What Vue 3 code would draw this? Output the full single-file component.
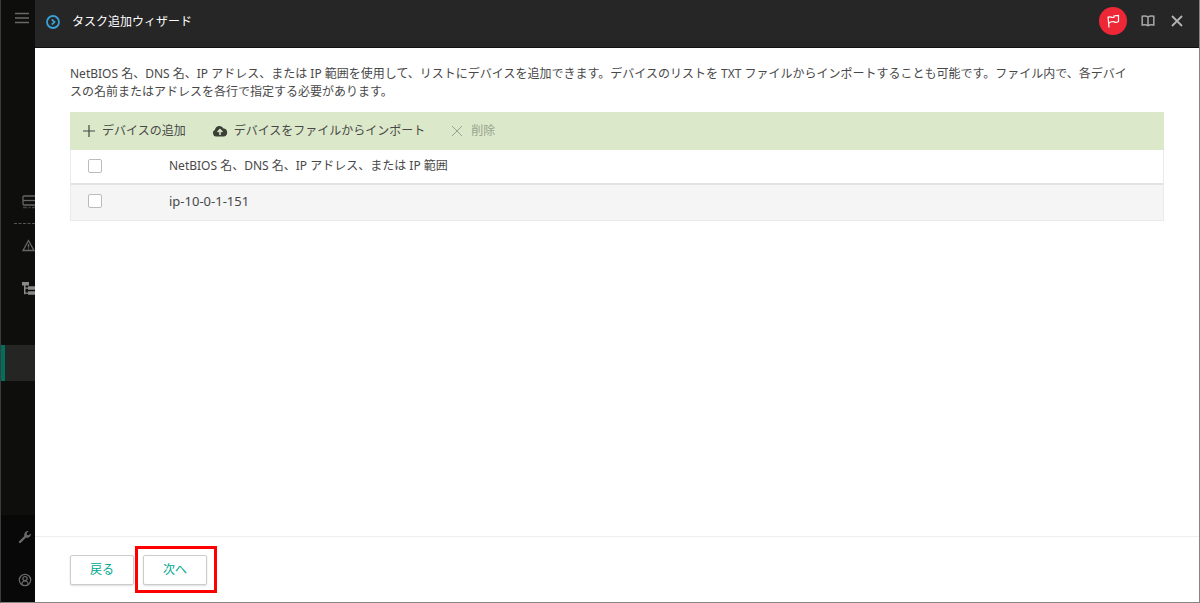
<script setup>
import { ref } from 'vue'

const columnTitle = 'NetBIOS 名、DNS 名、IP アドレス、または IP 範囲'

const devices = ref([{ id: 1, name: 'ip-10-0-1-151', selected: false }])
const allSelected = ref(false)

const toggleAll = () => {
  devices.value.forEach((device) => {
    device.selected = allSelected.value
  })
}
</script>

<template>
  <div class="page">
    <nav class="rail">
      <button class="rail__item rail__item--menu" aria-label="Menu">
        <svg width="16" height="12" viewBox="0 0 16 12" stroke="#686868" stroke-width="1.4">
          <path d="M1 1.5h14M1 6h14M1 10.5h14" />
        </svg>
      </button>
      <div class="rail__main">
        <button class="rail__item" aria-label="Server">
          <svg width="16" height="14" viewBox="0 0 16 14" fill="none" stroke="#666" stroke-width="1.3">
            <rect x="1" y="1" width="13" height="9" rx="1" />
            <path d="M1 5.5h13" />
            <path d="M1 12.5h4M6.5 12.5h2M10 12.5h4" stroke="#444" />
          </svg>
        </button>
        <div class="rail__divider"></div>
        <button class="rail__item" aria-label="Alerts">
          <svg width="16" height="14" viewBox="0 0 16 14" fill="none" stroke="#666" stroke-width="1.3">
            <path d="M6.5 1.5L12 11.5H1z" />
            <path d="M6.5 5v3.5M6.5 9.5v1" />
          </svg>
        </button>
        <button class="rail__item" aria-label="Devices">
          <svg width="16" height="14" viewBox="0 0 16 14" fill="#8a8a8a">
            <path d="M0 0h7v3.5H0zM2 3.5h1.5v8.800H2zM3 5.500h3v1.300H3zM3 10.500h3v1.300H3zM6 4.300h8v3.500H6zM6 9.300h8v3.500H6z" />
          </svg>
        </button>
        <div class="rail__current"></div>
      </div>
      <div class="rail__bottom">
        <button class="rail__item" aria-label="Settings">
          <svg width="14" height="14" viewBox="0 0 14 14">
            <path d="M2 12L8 6" stroke="#6a6a6a" stroke-width="2.4" stroke-linecap="round" />
            <path d="M10.6 1.2A3.6 3.6 0 0 0 6.3 5.6L8.4 7.7A3.6 3.6 0 0 0 12.8 3.5L10.7 5.3 8.8 5 8.7 3.1z" fill="#6a6a6a" />
          </svg>
        </button>
        <button class="rail__item" aria-label="Account">
          <svg width="14" height="14" viewBox="0 0 14 14" fill="none" stroke="#6a6a6a" stroke-width="1.2">
            <circle cx="7" cy="7" r="5.7" />
            <circle cx="7" cy="5.6" r="2.1" />
            <path d="M3.8 11c.2-2 1.4-3 3.2-3s3 1 3.2 3" />
          </svg>
        </button>
      </div>
    </nav>

    <main class="wizard">
      <header class="wizard__header">
        <svg width="14" height="14" viewBox="0 0 14 14" fill="none" stroke="#3aa0d8">
          <circle cx="7" cy="7" r="6" stroke-width="1.8" />
          <path d="M5.8 4.3L8.5 7 5.8 9.7" stroke-width="1.8" />
        </svg>
        <h1 class="wizard__title">タスク追加ウィザード</h1>
        <div class="wizard__actions">
          <button class="flag" aria-label="Flag">
            <svg width="14" height="14" viewBox="0 0 14 14" fill="none" stroke="#fff" stroke-width="1.2">
              <path d="M2 2.5L3 13.5M2.2 3.5C4.5 1.5 5.5 4.5 8 3.2V2L12.5 1.5V7.5C10 9 8.5 8.5 7.5 7.5C6 7.5 4 7.5 2.7 9.3" />
            </svg>
          </button>
          <button class="header-button" aria-label="Help">
            <svg width="14" height="12" viewBox="0 0 14 12" fill="none" stroke="#a8a8a8" stroke-width="1.5">
              <path d="M7 2C5.5.8 3 .8 1.2 1.2V10C3 9.6 5.5 9.6 7 10.7C8.5 9.6 11 9.6 12.8 10V1.2C11 .8 8.5.8 7 2zM7 2v8.5" />
            </svg>
          </button>
          <button class="header-button" aria-label="Close">
            <svg width="12" height="12" viewBox="0 0 12 12" stroke="#b4b4b4" stroke-width="1.8">
              <path d="M1 1l10 10M11 1L1 11" />
            </svg>
          </button>
        </div>
      </header>

      <section class="wizard__content">
        <p class="wizard__text">
          NetBIOS 名、DNS 名、IP アドレス、または IP 範囲を使用して、リストにデバイスを追加できます。デバイスのリストを TXT ファイルからインポートすることも可能です。ファイル内で、各デバイスの名前またはアドレスを各行で指定する必要があります。
        </p>

        <div class="toolbar">
          <button class="toolbar__button">
            <svg width="14" height="14" viewBox="0 0 14 14" stroke="#444" stroke-width="1.2">
              <path d="M7 1v12M1 7h12" />
            </svg>
            デバイスの追加
          </button>
          <button class="toolbar__button">
            <svg width="16" height="12" viewBox="0 0 16 12">
              <path d="M4 11.5A3.5 3.5 0 0 1 3 4.8A4.5 4.5 0 0 1 11.5 3.6A4 4 0 0 1 12 11.5z" fill="#3a3f38" />
              <path d="M8 10V5M5.6 7L8 4.6 10.4 7" fill="none" stroke="#dbe8c9" stroke-width="1.5" />
            </svg>
            デバイスをファイルからインポート
          </button>
          <button class="toolbar__button toolbar__button--delete" disabled>
            <svg width="12" height="12" viewBox="0 0 12 12" stroke="#9aa38f" stroke-width="1">
              <path d="M1 1l10 10M11 1L1 11" />
            </svg>
            削除
          </button>
        </div>

        <table class="devices">
          <thead>
            <tr>
              <th class="devices__check">
                <input v-model="allSelected" type="checkbox" :aria-label="columnTitle" @change="toggleAll" />
              </th>
              <th>{{ columnTitle }}</th>
            </tr>
          </thead>
          <tbody>
            <tr v-for="device in devices" :key="device.id">
              <td class="devices__check">
                <input v-model="device.selected" type="checkbox" :aria-label="device.name" />
              </td>
              <td>{{ device.name }}</td>
            </tr>
          </tbody>
        </table>
      </section>

      <footer class="wizard__footer">
        <button class="button">戻る</button>
        <button class="button button--next">次へ</button>
      </footer>
    </main>
  </div>
</template>

<style>
body {
  margin: 0;
}
</style>

<style scoped>
.page {
  display: flex;
  box-sizing: border-box;
  min-height: 100vh;

  border: 1px solid #858585;
  border-top: 0;
  border-left-color: #3c3c3c;

  color: #484848;
  font-family: 'Noto Sans', 'Noto Sans CJK JP', sans-serif;
  font-size: 12px;
  line-height: 18px;
}

button {
  padding: 0;
  border: 0;

  background: none;
  color: inherit;
  font: inherit;
  cursor: pointer;
}

svg {
  display: block;
  flex: none;
}

.rail {
  display: flex;
  flex: none;
  flex-direction: column;
  overflow: hidden;

  width: 34px;

  background: #0e0e0c;
}

.rail__item {
  display: flex;
  align-items: center;

  height: 43px;
  padding-left: 21px;
}

.rail__item--menu {
  height: 35px;
  padding-left: 13px;
}

.rail__main {
  flex: 1;

  padding-top: 145px;
}

.rail__divider {
  margin-left: 13px;

  border-top: 1px dashed #555;
}

.rail__current {
  box-sizing: border-box;
  height: 36px;
  margin-top: 35px;

  border-left: 4px solid #00705c;

  background: #252523;
}

.rail__bottom {
  padding-bottom: 1px;

  background: #080808;
}

.rail__bottom .rail__item {
  padding-left: 17px;
}

.wizard {
  display: flex;
  flex: 1;
  flex-direction: column;

  min-width: 0;

  background: #fff;
}

.wizard__header {
  display: flex;
  align-items: center;

  box-sizing: border-box;
  height: 48px;
  padding: 0 16px 3px 11px;

  border-bottom: 1px solid #111;

  background: #262626;
}

.wizard__title {
  flex: 1;

  margin: 0 0 0 12px;

  color: #fff;
  font-size: 12px;
  font-weight: 400;
}

.wizard__actions {
  display: flex;
  align-items: center;

  padding-bottom: 2px;
}

.flag {
  display: flex;
  align-items: center;
  justify-content: center;

  width: 28px;
  height: 28px;
  margin-right: 14px;

  border-radius: 50%;

  background: #ee2737;
}

.header-button + .header-button {
  margin-left: 16px;
}

.wizard__content {
  flex: 1;

  padding: 17px 35px;
}

.wizard__text {
  margin: 0 0 11px;
  padding-right: 32px;
}

.toolbar {
  display: flex;
  align-items: center;
  column-gap: 26px;

  height: 38px;
  padding: 0 12px;

  background: #dbe8c9;
}

.toolbar__button {
  display: flex;
  align-items: center;
  column-gap: 6px;
}

.toolbar__button--delete {
  column-gap: 8px;

  color: #98a18d;
  cursor: default;
}

.devices {
  width: 100%;

  border: 1px solid #eaeaea;
  border-top: 0;
  border-spacing: 0;
}

.devices th,
.devices td {
  height: 31px;
  padding: 0 0 2px;

  font-weight: 400;
  text-align: left;
}

.devices th {
  border-bottom: 2px solid #e2e2e2;
}

.devices td {
  padding-bottom: 4px;

  background: #f5f5f5;
  font-size: 13px;
}

.devices .devices__check {
  width: 81px;
  padding-left: 17px;
}

.devices input {
  display: block;
  appearance: none;
  box-sizing: border-box;

  width: 14px;
  height: 14px;
  margin: 0;

  border: 1px solid #bbb;
  border-radius: 2px;

  background: #fff;
}

.devices input:checked {
  background: #00a88e;
}

.wizard__footer {
  display: flex;
  column-gap: 9px;

  padding: 18px 35px 17px;

  border-top: 1px solid #eee;
}

.button {
  width: 64px;
  height: 30px;

  border: 1px solid #ccc;
  border-radius: 2px;

  background: #fff;
  box-shadow: 0 1px 2px #ddd;
  color: #00a88e;
}

.button--next {
  position: relative;
}

/* highlight frame around the next step */
.button--next::after {
  position: absolute;
  inset: -10px -11px -9px -9px;

  border: 3px solid #f00;

  content: '';
}
</style>
